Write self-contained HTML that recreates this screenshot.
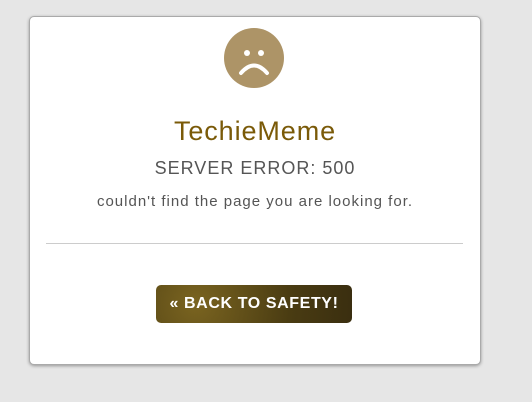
<!DOCTYPE html>
<html><head><style>
body{margin:0;width:532px;height:402px;background:#e6e6e6;font-family:"Liberation Sans",sans-serif;position:relative;overflow:hidden}
.card{position:absolute;left:29px;top:16px;width:450px;height:347px;background:#fff;border:1px solid #aaa;border-radius:5px;box-shadow:0 1px 3px rgba(0,0,0,.35)}
.t{position:absolute;left:0;width:100%;text-align:center;white-space:nowrap}
.btn{position:absolute;left:126px;top:268px;width:196px;height:38px;border-radius:5px;background:radial-gradient(circle at 20% 50%,#7a6420,#4a3c12 60%,#3a2e10);color:#fff;font-weight:bold;font-size:16px;line-height:38px;text-align:center;letter-spacing:.6px}
</style></head><body>
<div class="card">
<svg style="position:absolute;left:194px;top:11px" width="60" height="60" viewBox="0 0 60 60"><circle cx="30" cy="30" r="30" fill="#ad9467"/><circle cx="23" cy="25" r="3" fill="#fff"/><circle cx="37" cy="25" r="3" fill="#fff"/><path d="M17 45 Q30 30 43 45" stroke="#fff" stroke-width="4" fill="none" stroke-linecap="round"/></svg>
<div class="t" style="top:99px;font-size:27px;letter-spacing:.9px;color:#7a5a08">TechieMeme</div>
<div class="t" style="top:141px;font-size:18px;color:#555;letter-spacing:1px">SERVER ERROR: 500</div>
<div class="t" style="top:176px;font-size:15px;color:#555;letter-spacing:1px">couldn't find the page you are looking for.</div>
<div style="position:absolute;left:16px;top:226px;width:417px;height:1px;background:#ccc"></div>
<div class="btn">« BACK TO SAFETY!</div>
</div>
</body></html>
